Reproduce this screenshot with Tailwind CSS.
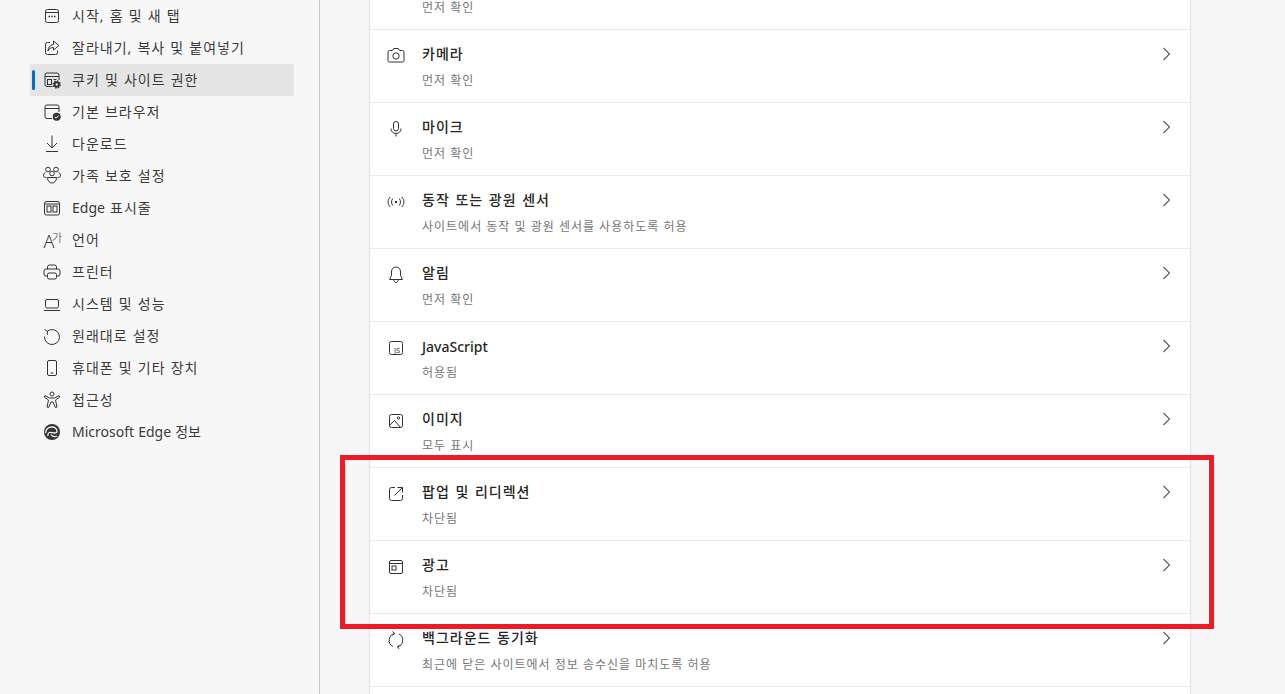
<!DOCTYPE html>
<html lang="ko">
<head>
  <meta charset="UTF-8">
  <meta name="viewport" content="width=device-width, initial-scale=1.0">
  <title>쿠키 및 사이트 권한</title>
  <script src="https://cdn.jsdelivr.net/npm/@tailwindcss/browser@4"></script>
</head>
<body class="bg-[#f7f7f7] overflow-hidden font-['Noto_Sans','Noto_Sans_CJK_KR',sans-serif]">
  <div class="relative flex h-[694px] w-[1285px] overflow-hidden">
    <!-- Sidebar -->
    <nav class="w-[320px] shrink-0 border-r border-[#c9c9c9] pl-[30px] text-[14px] text-[#3b3b3b] tracking-[1px] [word-spacing:0.5px]">
      <a class="flex h-8 w-[264px] items-center gap-[10px] pl-3">
        <svg class="h-5 w-5" viewBox="0 0 20 20" fill="none" stroke="#333"><rect x="3.5" y="3.5" width="13" height="13" rx="2"/><path d="M3.5 6.5h13"/><path d="M6.5 10.500h1.500M9.300 10.500h1.500M12 10.500h1.500" stroke-width="1.5"/></svg>
        <span class="pb-[2px]">시작, 홈 및 새 탭</span>
      </a>
      <a class="flex h-8 w-[264px] items-center gap-[10px] pl-3">
        <svg class="h-5 w-5" viewBox="0 0 20 20" fill="none" stroke="#333"><path d="M8 4.500H5.500a2 2 0 0 0-2 2v8a2 2 0 0 0 2 2h8a2 2 0 0 0 2-2v-2"/><path d="M11.500 3l5.500 4.500-5.500 4.500V9.500c-2.500 0-4.500 1-5.500 3.500 0-3.500 2-6 5.500-6.500z"/></svg>
        <span class="pb-[2px]">잘라내기, 복사 및 붙여넣기</span>
      </a>
      <a class="relative flex h-8 w-[264px] items-center gap-[10px] rounded-[2px] bg-[#e5e5e5] pl-3">
        <span class="absolute left-[2px] top-[6px] h-5 w-[3px] rounded-full bg-[#0f6cbd]"></span>
        <svg class="h-5 w-5" viewBox="0 0 20 20" fill="none" stroke="#333"><path d="M10.500 16.500H5a2 2 0 0 1-2-2V5a2 2 0 0 1 2-2h10a2 2 0 0 1 2 2v5"/><path d="M3 6.500h14"/><rect x="5.500" y="9.500" width="4" height="5"/><path d="M11.500 9.500h3"/><circle cx="14.700" cy="14.500" r="2.200" stroke-width="2"/><circle cx="14.700" cy="14.500" r="3.600" stroke-width="1.200" stroke-dasharray="1.500 1.300"/></svg>
        <span class="pb-[2px]">쿠키 및 사이트 권한</span>
      </a>
      <a class="flex h-8 w-[264px] items-center gap-[10px] pl-3">
        <svg class="h-5 w-5" viewBox="0 0 20 20" fill="none" stroke="#333"><path d="M10 16.500H5a2 2 0 0 1-2-2V5a2 2 0 0 1 2-2h10a2 2 0 0 1 2 2v5"/><path d="M3 6.500h14"/><circle cx="14.700" cy="14.700" r="4" fill="#333" stroke="none"/><path d="M12.800 14.800l1.400 1.300 2.400-2.600" stroke="#fff"/></svg>
        <span class="pb-[2px]">기본 브라우저</span>
      </a>
      <a class="flex h-8 w-[264px] items-center gap-[10px] pl-3">
        <svg class="h-5 w-5" viewBox="0 0 20 20" fill="none" stroke="#333"><path d="M10 1.500V14M5 9l5 5 5-5M4 17.500h12"/></svg>
        <span class="pb-[2px]">다운로드</span>
      </a>
      <a class="flex h-8 w-[264px] items-center gap-[10px] pl-3">
        <svg class="h-5 w-5" viewBox="0 0 20 20" fill="none" stroke="#333"><circle cx="6" cy="3.500" r="2.300"/><circle cx="14" cy="3.500" r="2.300"/><circle cx="10" cy="7.500" r="2.300"/><path d="M3.500 6.500C2 7 1.500 8.500 1.500 10c0 1 1 1.500 3 1.500M16.500 6.500C18 7 18.500 8.500 18.500 10c0 1-1 1.500-3 1.500M5.500 11.500h9c0 3.500-2 5.500-4.500 5.500s-4.500-2-4.500-5.500z"/></svg>
        <span class="pb-[2px]">가족 보호 설정</span>
      </a>
      <a class="flex h-8 w-[264px] items-center gap-[10px] pl-3">
        <svg class="h-5 w-5" viewBox="0 0 20 20" fill="none" stroke="#333"><rect x="2.500" y="3.500" width="15" height="13.500" rx="2"/><path d="M2.500 6h15"/><rect x="5" y="8" width="4" height="6"/><rect x="11" y="8" width="4" height="6"/></svg>
        <span class="pb-[2px]"><span class="tracking-normal">Edge</span> 표시줄</span>
      </a>
      <a class="flex h-8 w-[264px] items-center gap-[10px] pl-3">
        <svg class="h-5 w-5 overflow-visible" viewBox="0 0 20 20"><text x="1.500" y="18" font-size="18" font-weight="300" fill="#333" font-family="Noto Sans">A</text><text x="10" y="12" font-size="11" font-weight="300" fill="#333" font-family="Noto Sans CJK KR">가</text></svg>
        <span class="pb-[2px]">언어</span>
      </a>
      <a class="flex h-8 w-[264px] items-center gap-[10px] pl-3">
        <svg class="h-5 w-5" viewBox="0 0 20 20" fill="none" stroke="#333"><path d="M5.500 7V5a2 2 0 0 1 2-2h5a2 2 0 0 1 2 2v2"/><path d="M5.500 14H4a2 2 0 0 1-2-2V9a2 2 0 0 1 2-2h12a2 2 0 0 1 2 2v3a2 2 0 0 1-2 2h-1.500"/><rect x="5.500" y="11" width="9" height="6" rx="1.500"/></svg>
        <span class="pb-[2px]">프린터</span>
      </a>
      <a class="flex h-8 w-[264px] items-center gap-[10px] pl-3">
        <svg class="h-5 w-5" viewBox="0 0 20 20" fill="none" stroke="#333"><rect x="3.500" y="5.500" width="13" height="8.500" rx="1.500"/><path d="M2 16.500h16"/></svg>
        <span class="pb-[2px]">시스템 및 성능</span>
      </a>
      <a class="flex h-8 w-[264px] items-center gap-[10px] pl-3">
        <svg class="h-5 w-5" viewBox="0 0 20 20" fill="none" stroke="#333"><path d="M5.500 5A7.500 7.500 0 1 1 2.500 10.500"/><path d="M2.500 3.500l3 1.800-.2 3.500"/></svg>
        <span class="pb-[2px]">원래대로 설정</span>
      </a>
      <a class="flex h-8 w-[264px] items-center gap-[10px] pl-3">
        <svg class="h-5 w-5" viewBox="0 0 20 20" fill="none" stroke="#333"><rect x="5.500" y="2.500" width="9" height="15" rx="1.500"/><path d="M8.500 15h3"/></svg>
        <span class="pb-[2px]">휴대폰 및 기타 장치</span>
      </a>
      <a class="flex h-8 w-[264px] items-center gap-[10px] pl-3">
        <svg class="h-5 w-5" viewBox="0 0 20 20" fill="none" stroke="#333"><circle cx="10" cy="4" r="2"/><path d="M3 5.500l4.500 2.500h5L17 5.500l.8 1.500-4.300 3 1.500 7-1.600.5-2.400-5.500h-2L6.600 17.500 5 17l1.500-7-4.300-3z"/></svg>
        <span class="pb-[2px]">접근성</span>
      </a>
      <a class="flex h-8 w-[264px] items-center gap-[10px] pl-3">
        <svg class="h-5 w-5" viewBox="0 0 20 20"><circle cx="10" cy="10" r="8" fill="#333"/><path d="M3.500 11C4 7 7 5 10 5c3 0 5 2 5 4.500 0 1-1 1.500-2.500 1.500-2 0-3.500-1-5-.5-1.500.5-2 2-1.500 3.500" fill="none" stroke="#f7f7f7" stroke-width="1.300"/><path d="M9 12.500c1 2 3.500 2.800 6 1.500" fill="none" stroke="#f7f7f7" stroke-width="1.300"/></svg>
        <span class="pb-[2px] tracking-normal">Microsoft Edge 정보</span>
      </a>
    </nav>

    <!-- Permission list -->
    <main class="flex-1 pl-[50px]">
      <div class="-mt-[43px] w-[820px] bg-white shadow-[0_0_2px_rgba(0,0,0,0.25)]">
        <div class="flex h-[73px] border-b border-[#ebebeb]">
          <div class="flex-1 pl-[52px] pt-[14px]">
            <p class="h-5"></p>
            <p class="mt-[9px] text-[12px] leading-4 tracking-[1px] text-[#767676]">먼저 확인</p>
          </div>
        </div>

        <div class="flex h-[73px] items-start border-b border-[#ebebeb] pl-4 pr-[15px]">
          <svg class="mt-[15px] h-5 w-5 shrink-0" viewBox="0 0 20 20" fill="none" stroke="#333"><path d="M3.500 5.500h3l1.200-2h4.600l1.200 2h3A1.500 1.500 0 0 1 18 7v8.500a1.500 1.500 0 0 1-1.500 1.500h-13A1.500 1.500 0 0 1 2 15.500V7a1.500 1.500 0 0 1 1.500-1.500z"/><circle cx="10" cy="11" r="3.200"/></svg>
          <div class="flex-1 pl-4 pt-[14px]">
            <p class="text-[14px] font-medium leading-5 tracking-[1px] text-[#262626] [word-spacing:1px]">카메라</p>
            <p class="mt-[9px] text-[12px] leading-4 tracking-[1px] text-[#767676]">먼저 확인</p>
          </div>
          <svg class="mt-[16px] h-4 w-4 shrink-0" viewBox="0 0 16 16" fill="none" stroke="#606060" stroke-width="1.200"><path d="M4.500 2l6 6-6 6"/></svg>
        </div>

        <div class="flex h-[73px] items-start border-b border-[#ebebeb] pl-4 pr-[15px]">
          <svg class="mt-[15px] h-5 w-5 shrink-0" viewBox="0 0 20 20" fill="none" stroke="#333"><rect x="7.500" y="3.500" width="5" height="9.500" rx="2.500"/><path d="M5 10.500c0 3 2 5 5 5s5-2 5-5M10 15.500v3"/></svg>
          <div class="flex-1 pl-4 pt-[14px]">
            <p class="text-[14px] font-medium leading-5 tracking-[1px] text-[#262626] [word-spacing:1px]">마이크</p>
            <p class="mt-[9px] text-[12px] leading-4 tracking-[1px] text-[#767676]">먼저 확인</p>
          </div>
          <svg class="mt-[16px] h-4 w-4 shrink-0" viewBox="0 0 16 16" fill="none" stroke="#606060" stroke-width="1.200"><path d="M4.500 2l6 6-6 6"/></svg>
        </div>

        <div class="flex h-[73px] items-start border-b border-[#ebebeb] pl-4 pr-[15px]">
          <svg class="mt-[15px] h-5 w-5 shrink-0" viewBox="0 0 20 20" fill="none" stroke="#333"><circle cx="10" cy="11" r="1.200" fill="#333" stroke="none"/><path d="M6.800 7.500c-1.700 2-1.700 5 0 7M13.200 7.500c1.700 2 1.700 5 0 7M4.300 6c-3 3-3 7 0 10M15.700 6c3 3 3 7 0 10"/></svg>
          <div class="flex-1 pl-4 pt-[14px]">
            <p class="text-[14px] font-medium leading-5 tracking-[1px] text-[#262626] [word-spacing:1px]">동작 또는 광원 센서</p>
            <p class="mt-[9px] text-[12px] leading-4 tracking-[1px] text-[#767676]">사이트에서 동작 및 광원 센서를 사용하도록 허용</p>
          </div>
          <svg class="mt-[16px] h-4 w-4 shrink-0" viewBox="0 0 16 16" fill="none" stroke="#606060" stroke-width="1.200"><path d="M4.500 2l6 6-6 6"/></svg>
        </div>

        <div class="flex h-[73px] items-start border-b border-[#ebebeb] pl-4 pr-[15px]">
          <svg class="mt-[15px] h-5 w-5 shrink-0" viewBox="0 0 20 20" fill="none" stroke="#333"><path d="M10 3c-3 0-4.500 2-4.500 5v3.500L3.500 15.500h13l-2-4V8c0-3-1.500-5-4.500-5z"/><path d="M7.800 15.500c0 2 1 3 2.200 3s2.200-1 2.200-3"/></svg>
          <div class="flex-1 pl-4 pt-[14px]">
            <p class="text-[14px] font-medium leading-5 tracking-[1px] text-[#262626]">알림</p>
            <p class="mt-[9px] text-[12px] leading-4 tracking-[1px] text-[#767676]">먼저 확인</p>
          </div>
          <svg class="mt-[16px] h-4 w-4 shrink-0" viewBox="0 0 16 16" fill="none" stroke="#606060" stroke-width="1.200"><path d="M4.500 2l6 6-6 6"/></svg>
        </div>

        <div class="flex h-[73px] items-start border-b border-[#ebebeb] pl-4 pr-[15px]">
          <svg class="mt-[15px] h-5 w-5 shrink-0" viewBox="0 0 20 20" fill="none" stroke="#333"><rect x="3.500" y="4.500" width="13" height="13" rx="2"/><text x="8" y="15.500" font-size="7.500" fill="#333" stroke="none" font-family="Noto Sans">JS</text></svg>
          <div class="flex-1 pl-4 pt-[15px]">
            <p class="text-[14px] font-medium leading-5 text-[#262626]">JavaScript</p>
            <p class="mt-[8px] text-[12px] leading-4 tracking-[1px] text-[#767676]">허용됨</p>
          </div>
          <svg class="mt-[16px] h-4 w-4 shrink-0" viewBox="0 0 16 16" fill="none" stroke="#606060" stroke-width="1.200"><path d="M4.500 2l6 6-6 6"/></svg>
        </div>

        <div class="flex h-[73px] items-start border-b border-[#ebebeb] pl-4 pr-[15px]">
          <svg class="mt-[15px] h-5 w-5 shrink-0" viewBox="0 0 20 20" fill="none" stroke="#333"><rect x="3.500" y="4.500" width="13" height="13" rx="2"/><circle cx="12.500" cy="8" r="1.200"/><path d="M3.500 15.500l5-5 6 7"/></svg>
          <div class="flex-1 pl-4 pt-[14px]">
            <p class="text-[14px] font-medium leading-5 tracking-[1px] text-[#262626]">이미지</p>
            <p class="mt-[9px] text-[12px] leading-4 tracking-[1px] text-[#767676]">모두 표시</p>
          </div>
          <svg class="mt-[16px] h-4 w-4 shrink-0" viewBox="0 0 16 16" fill="none" stroke="#606060" stroke-width="1.200"><path d="M4.500 2l6 6-6 6"/></svg>
        </div>

        <div class="flex h-[73px] items-start border-b border-[#ebebeb] pl-4 pr-[15px]">
          <svg class="mt-[15px] h-5 w-5 shrink-0" viewBox="0 0 20 20" fill="none" stroke="#333"><path d="M9 4.500H5.500a2 2 0 0 0-2 2v9a2 2 0 0 0 2 2h9a2 2 0 0 0 2-2V12"/><path d="M8.500 12.500l8-8M11.500 4.500h5v5"/></svg>
          <div class="flex-1 pl-4 pt-[14px]">
            <p class="text-[14px] font-medium leading-5 tracking-[1px] text-[#262626] [word-spacing:1px]">팝업 및 리디렉션</p>
            <p class="mt-[9px] text-[12px] leading-4 tracking-[1px] text-[#767676]">차단됨</p>
          </div>
          <svg class="mt-[16px] h-4 w-4 shrink-0" viewBox="0 0 16 16" fill="none" stroke="#606060" stroke-width="1.200"><path d="M4.500 2l6 6-6 6"/></svg>
        </div>

        <div class="flex h-[73px] items-start border-b border-[#ebebeb] pl-4 pr-[15px]">
          <svg class="mt-[15px] h-5 w-5 shrink-0" viewBox="0 0 20 20" fill="none" stroke="#333"><rect x="3.500" y="4.500" width="13" height="13" rx="1.500"/><path d="M3.500 7.500h13"/><rect x="6" y="10" width="4" height="4"/></svg>
          <div class="flex-1 pl-4 pt-[14px]">
            <p class="text-[14px] font-medium leading-5 tracking-[1px] text-[#262626]">광고</p>
            <p class="mt-[9px] text-[12px] leading-4 tracking-[1px] text-[#767676]">차단됨</p>
          </div>
          <svg class="mt-[16px] h-4 w-4 shrink-0" viewBox="0 0 16 16" fill="none" stroke="#606060" stroke-width="1.200"><path d="M4.500 2l6 6-6 6"/></svg>
        </div>

        <div class="flex h-[73px] items-start border-b border-[#ebebeb] pl-4 pr-[15px]">
          <svg class="mt-[15px] h-5 w-5 shrink-0" viewBox="0 0 20 20" fill="none" stroke="#333"><path d="M8.700 4.500A7 7 0 0 0 7 17.600M13 5a7 7 0 0 1-1.700 13"/><path d="M6.500 2.500l2.200 2-2.200 2M13.500 16l-2.200 2 2.200 2"/></svg>
          <div class="flex-1 pl-4 pt-[14px]">
            <p class="text-[14px] font-medium leading-5 tracking-[1px] text-[#262626] [word-spacing:1px]">백그라운드 동기화</p>
            <p class="mt-[9px] text-[12px] leading-4 tracking-[1px] text-[#767676]">최근에 닫은 사이트에서 정보 송수신을 마치도록 허용</p>
          </div>
          <svg class="mt-[16px] h-4 w-4 shrink-0" viewBox="0 0 16 16" fill="none" stroke="#606060" stroke-width="1.200"><path d="M4.500 2l6 6-6 6"/></svg>
        </div>

        <div class="h-[73px]"></div>
      </div>
    </main>

    <!-- Red annotation box -->
    <div class="absolute left-[340px] top-[455px] h-[174px] w-[874px] border-[5px] border-[#ed1c24]"></div>
  </div>
</body>
</html>
